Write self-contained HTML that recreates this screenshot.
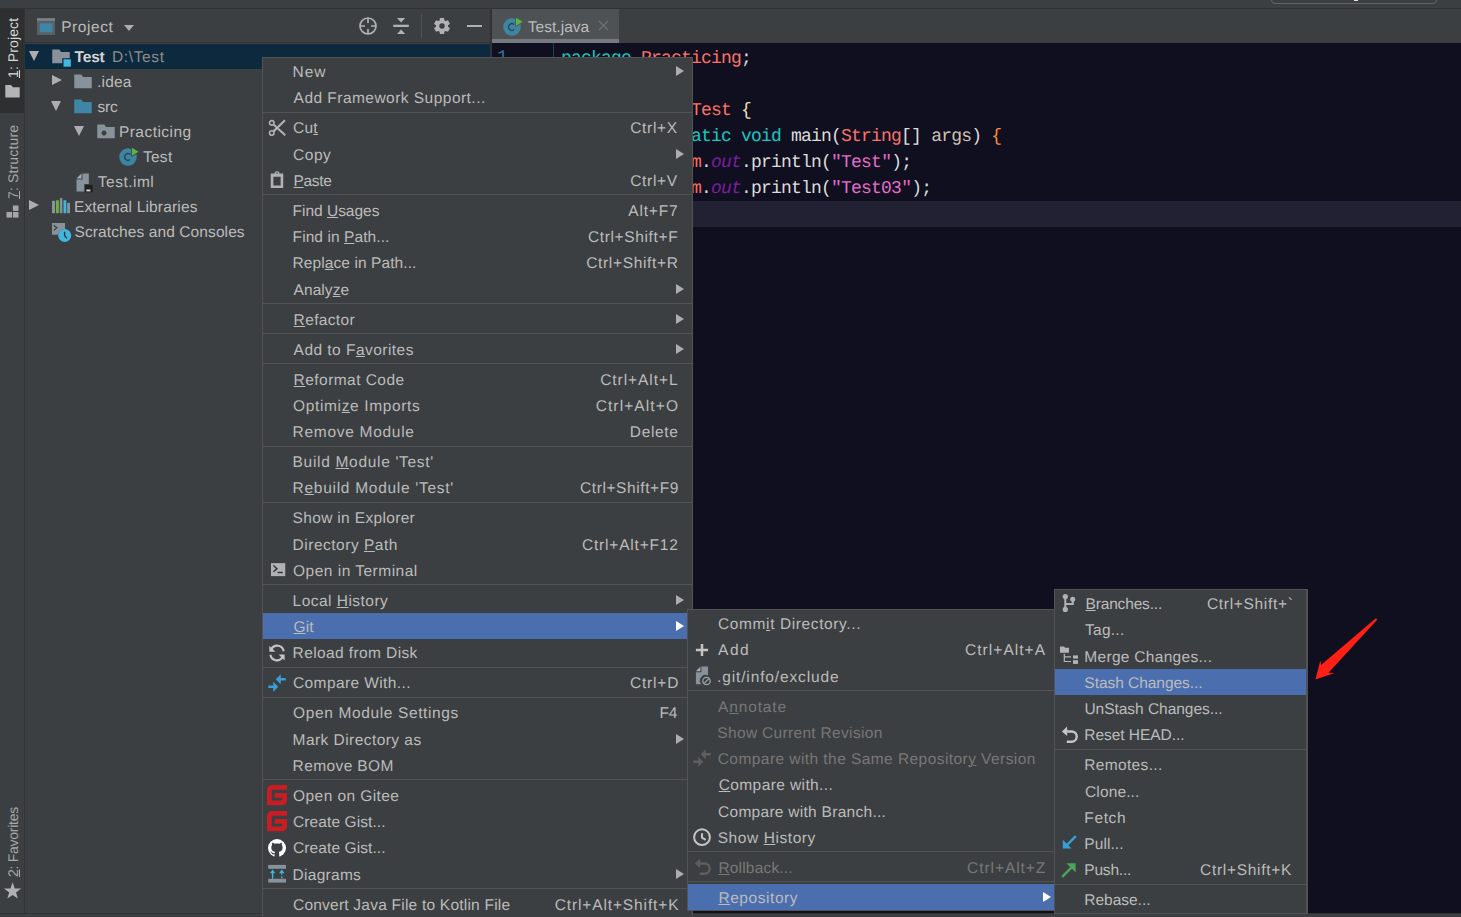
<!DOCTYPE html><html><head><meta charset="utf-8"><title>IDE</title><style>
*{box-sizing:border-box;margin:0;padding:0}
html,body{width:1461px;height:917px;overflow:hidden;background:#3c3f41}
body{font-family:"Liberation Sans",sans-serif;font-size:15px;color:#bbbbbb;position:relative;text-rendering:geometricPrecision}
u{text-decoration:underline;text-underline-offset:1.4px;text-decoration-thickness:1.3px}
svg{display:block}
.abs{position:absolute}
#top{left:0;top:0;width:1461px;height:9px;background:#3c3f41;border-bottom:1px solid #323232}
#lstrip{left:0;top:9px;width:25px;height:904px;background:#3c3f41;border-right:1px solid #323232}
#lsel{left:0;top:9px;width:24px;height:104px;background:#2d2f30}
.vt{position:absolute;white-space:nowrap;transform-origin:0 0;transform:rotate(-90deg);font-size:14px;line-height:16px;height:16px}
#proj{left:25px;top:9px;width:465px;height:904px;background:#3c3f41}
#phead{left:25px;top:9px;width:465px;height:34px;border-bottom:1px solid #323232}
.tr{position:absolute;left:25px;width:465px;height:25px;line-height:25px;white-space:nowrap}
.tr.sel{background:#0d293e;width:465px}
.tr .ic,.mi .ic{position:absolute;width:20px;height:20px}
.tx{position:absolute;top:0;font-size:15.5px;line-height:20px;height:20px;white-space:nowrap}
.tr .tx{top:3.63px}
.ta{position:absolute;top:7px;width:0;height:0}
.ta.down{border-left:5.8px solid transparent;border-right:5.8px solid transparent;border-top:10px solid #adadad;top:7px}
.ta.right{border-top:5.8px solid transparent;border-bottom:5.8px solid transparent;border-left:10px solid #adadad;top:6.2px}
#divider{left:490px;top:9px;width:2px;height:904px;background:#323232}
#tabs{left:492px;top:9px;width:969px;height:34px;background:#3c3f41}
#tab{left:492px;top:9px;width:127px;height:34px;background:#4e5254}
#tabul{left:492px;top:39px;width:127px;height:4px;background:#747a80}
#editor{left:492px;top:43px;width:969px;height:870px;background:#100f1f}
#gutline{left:553px;top:43px;width:1px;height:870px;background:#0e4a50}
#curline{left:554px;top:201px;width:907px;height:26px;background:#222133}
#bottom{left:0;top:913px;width:1461px;height:4px;background:#3c3f41;border-top:1px solid #323232}
.cln{position:absolute;left:561px;height:26px;line-height:26px;white-space:pre;font-family:"Liberation Mono",monospace;font-size:18px;letter-spacing:-0.8px;color:#d8d8d8}
.kw{color:#19c8c0}.cl{color:#fa7268}.pl{color:#dcdcdc}.b1{color:#f3dfae}.b2{color:#ff8c32}
.pa{color:#cfc0b4}.fi{color:#7a1fa0;font-style:italic}.st{color:#e16ec8}.q{color:#e16ec8}
.menu{position:absolute;background:#3c3f41;border:1px solid #535353;overflow:hidden}
.mi{position:absolute;left:0;right:0;white-space:nowrap}
.mi.hl{background:#4b6eaf}
.mi.dis{color:#777777}
.mi .ar{position:absolute;width:0;height:0;border-top:5px solid transparent;border-bottom:5px solid transparent;border-left:8px solid #adadad}
.mi.hl .ar{border-left-color:#fff}
.sep{position:absolute;left:0;right:0;height:1px;background:#535353}
</style></head><body>
<div id="top" class="abs"></div>
<div id="topbox" class="abs" style="left:1270.5px;top:-10px;width:166px;height:14.3px;border:1.5px solid #626567;border-radius:4px"></div><div class="abs" style="left:1354px;top:0;width:4px;height:1px;background:#e8e0d8"></div>
<div id="lstrip" class="abs"></div><div id="lsel" class="abs"></div>
<div class="vt" style="left:5px;top:78px;color:#d8d8d8;letter-spacing:0.1px"><u>1</u>: Project</div>
<div class="abs" style="left:4px;top:83px"><svg width="17" height="16" viewBox="0 0 17 16" style="overflow:visible"><path fill="#b4b4b4" d="M1.3,2 H7 L9,4.2 H15.7 V14.4 H1.3 Z"/></svg></div>
<div class="vt" style="left:5px;top:198.5px;color:#a8a8a8;letter-spacing:0.15px"><u>7</u>: Structure</div>
<div class="abs" style="left:4px;top:202px"><svg width="17" height="16" viewBox="0 0 17 16" style="overflow:visible"><rect x="2.5" y="10" width="5.5" height="5.6" fill="#a4a6a8"/><rect x="8.9" y="10" width="5.6" height="5.6" fill="#a4a6a8"/><rect x="8.9" y="3.5" width="5.6" height="5.4" fill="#a4a6a8"/></svg></div>
<div class="vt" style="left:5px;top:877px;color:#a8a8a8;letter-spacing:-0.27px"><u>2</u>: Favorites</div>
<div class="abs" style="left:4px;top:882px"><svg width="18" height="18" viewBox="0 0 18 18" style="overflow:visible"><polygon fill="#afb1b3" points="8.60,0.30 10.72,6.39 17.16,6.52 12.02,10.41 13.89,16.58 8.60,12.90 3.31,16.58 5.18,10.41 0.04,6.52 6.48,6.39"/></svg></div>
<div id="proj" class="abs"></div><div id="phead" class="abs"></div>
<div class="abs" style="left:37px;top:18px"><svg width="18" height="17" viewBox="0 0 18 17" style="overflow:visible"><rect x="0" y="0.3" width="18" height="16.7" fill="#596066"/><rect x="0" y="0.3" width="18" height="2.4" fill="#7d868c"/><rect x="2.8" y="5.3" width="12.6" height="9" fill="#3d86a5"/></svg></div>
<div class="abs" style="left:0;top:18px;height:20px;line-height:20px"><span id="ptitle" class="tx " style="left:61.20px;letter-spacing:0.552px;">Project</span></div>
<div class="abs" style="left:124px;top:24.5px;width:0;height:0;border-left:5.5px solid transparent;border-right:5.5px solid transparent;border-top:6px solid #adadad"></div>
<div class="abs" style="left:359px;top:17px"><svg width="18" height="18" viewBox="0 0 18 18" style="overflow:visible"><circle cx="9" cy="9" r="8" fill="none" stroke="#afb1b3" stroke-width="1.7"/><path d="M9,1 V6 M9,12 V17 M1,9 H6 M12,9 H17" stroke="#afb1b3" stroke-width="1.7"/></svg></div>
<div class="abs" style="left:392px;top:17px"><svg width="18" height="18" viewBox="0 0 18 18" style="overflow:visible"><rect x="1.3" y="7.7" width="15.5" height="2.3" fill="#afb1b3"/><path d="M5,1 H13.2 L9.1,5.6 Z M5,17 H13.2 L9.1,12.4 Z" fill="#afb1b3"/></svg></div>
<div class="abs" style="left:421px;top:14px;width:1px;height:24px;background:#55534f"></div>
<div class="abs" style="left:433px;top:17px"><svg width="18" height="18" viewBox="0 0 18 18" style="overflow:visible"><path fill-rule="evenodd" fill="#afb1b3" d="M6.95,0.96 L11.05,0.96 L11.49,3.43 L12.58,4.06 L14.94,3.20 L16.99,6.76 L15.07,8.37 L15.07,9.63 L16.99,11.24 L14.94,14.80 L12.58,13.94 L11.49,14.57 L11.05,17.04 L6.95,17.04 L6.51,14.57 L5.42,13.94 L3.06,14.80 L1.01,11.24 L2.93,9.63 L2.93,8.37 L1.01,6.76 L3.06,3.20 L5.42,4.06 L6.51,3.43 Z M9,6.2 a2.8,2.8 0 1 0 0.001,0 Z"/></svg></div>
<div class="abs" style="left:466.5px;top:25px;width:15px;height:2px;background:#afb1b3"></div>
<div class="tr sel" style="top:44px"><span class="ta down" style="left:3.6999999999999993px"></span><span class="ic" style="left:25.75px;top:2.5px"><svg width="20" height="20" viewBox="0 0 16 16" style="overflow:visible" ><path fill="#87929a" d="M9,13 L1,13 L1,2 L6.697,2 L7.985,4 L15,4 L15,9 L9,9 Z"/><rect x="10" y="9.85" width="5.9" height="5.9" fill="#40b6e0"/></svg></span><span id="t0a" class="tx " style="left:74.61px;letter-spacing:-0.190px;margin-left:-25px;font-weight:bold;color:#d5d5d5">Test</span><span id="t0b" class="tx " style="left:111.92px;letter-spacing:0.645px;margin-left:-25px;color:#8c8c8c">D:\Test</span></div><div class="tr" style="top:69px"><span class="ta right" style="left:27px"></span><span class="ic" style="left:47.650000000000006px;top:2.5px"><svg width="20" height="20" viewBox="0 0 16 16" style="overflow:visible" ><polygon fill="#87929a" points="1 13 15 13 15 4 7.985 4 6.697 2 1 2"/></svg></span><span id="t1" class="tx " style="left:96.96px;letter-spacing:0.225px;margin-left:-25px">.idea</span></div><div class="tr" style="top:94px"><span class="ta down" style="left:25.700000000000003px"></span><span class="ic" style="left:47.650000000000006px;top:2.5px"><svg width="20" height="20" viewBox="0 0 16 16" style="overflow:visible" ><polygon fill="#3d86a5" points="1 13 15 13 15 4 7.985 4 6.697 2 1 2"/></svg></span><span id="t2" class="tx " style="left:97.60px;letter-spacing:-0.300px;margin-left:-25px">src</span></div><div class="tr" style="top:119px"><span class="ta down" style="left:49.2px"></span><span class="ic" style="left:70.65px;top:2.5px"><svg width="20" height="20" viewBox="0 0 16 16" style="overflow:visible" ><path fill="#87929a" fill-rule="evenodd" d="M1,13 L15,13 L15,4 L7.985,4 L6.697,2 L1,2 Z M6.4,6.8 a2,2 0 1 0 0.001,0 Z"/></svg></span><span id="t3" class="tx " style="left:118.88px;letter-spacing:0.478px;margin-left:-25px">Practicing</span></div><div class="tr" style="top:144px"><span class="ic" style="left:93px;top:2.5px"><svg width="20" height="20" viewBox="0 0 16 16" style="overflow:visible" ><defs><mask id="mk1"><rect x="-2" y="-2" width="22" height="22" fill="#fff"/><path d="M11.2,0.5 L16.5,3.8 L11.2,7.0 Z" fill="#000" stroke="#000" stroke-width="1.3" stroke-linejoin="round"/></mask></defs><g mask="url(#mk1)"><circle cx="8" cy="8" r="7" fill="#3e86a0"/><path d="M9.74,10.07 A2.7,2.7 0 1 1 9.74,5.93" fill="none" stroke="#27485a" stroke-width="1.1"/></g><path d="M11.2,0.5 L16.5,3.8 L11.2,7.0 Z" fill="#5ab644"/></svg></span><span id="t4" class="tx " style="left:142.90px;letter-spacing:0.299px;margin-left:-25px">Test</span></div><div class="tr" style="top:169px"><span class="ic" style="left:50.400000000000006px;top:2.5px"><svg width="20" height="20" viewBox="0 0 20 20" style="overflow:visible"><path fill="#a3adb4" d="M1.5,6.5 L6.5,1.5 L6.5,6.5 Z"/><path fill="#87929a" d="M7.5,1.5 L13.8,1.5 L13.8,12 L9.2,12 L9.2,19.5 L1.5,19.5 L1.5,7.5 L7.5,7.5 Z"/><rect x="10.1" y="12.9" width="7.6" height="7.4" fill="#231f20"/><rect x="11.4" y="17.5" width="4" height="1.9" fill="#d6d6d6"/></svg></span><span id="t5" class="tx " style="left:97.82px;letter-spacing:0.487px;margin-left:-25px">Test.iml</span></div><div class="tr" style="top:194px"><span class="ta right" style="left:4px"></span><span class="ic" style="left:26px;top:0px"><svg width="20" height="20" viewBox="0 0 20 20" style="overflow:visible"><rect x="1" y="6.8" width="3" height="12.4" fill="#87929a"/><rect x="4.9" y="6.3" width="3" height="12.9" fill="#62b543"/><rect x="8.8" y="4.1" width="2.6" height="15.1" fill="#87929a"/><rect x="12.5" y="6.3" width="2.8" height="12.9" fill="#40b6e0"/><rect x="16.1" y="8.9" width="2.9" height="10.3" fill="#87929a"/></svg></span><span id="t6" class="tx " style="left:73.90px;letter-spacing:0.176px;margin-left:-25px">External Libraries</span></div><div class="tr" style="top:219px"><span class="ic" style="left:26px;top:0px"><svg width="20" height="20" viewBox="0 0 20 20" style="overflow:visible"><path fill="#87929a" d="M1,4.1 H14 V10.3 A7.8,7.8 0 0 0 7,15.7 H1 Z"/><path d="M2.8,6.2 L5.8,8.8 L2.8,11.4" fill="none" stroke="#3c3f41" stroke-width="1.2"/><circle cx="13.7" cy="16.5" r="6.5" fill="#40b6e0"/><path d="M13.6,12.8 V16.6 L16,19.4" fill="none" stroke="#27343c" stroke-width="1.4"/></svg></span><span id="t7" class="tx " style="left:74.50px;letter-spacing:0.100px;margin-left:-25px">Scratches and Consoles</span></div>
<div id="divider" class="abs"></div>
<div id="tabs" class="abs"></div><div id="tab" class="abs"></div><div id="tabul" class="abs"></div>
<div class="abs" style="left:502px;top:16.5px"><svg width="20" height="20" viewBox="0 0 16 16" style="overflow:visible" ><defs><mask id="mk2"><rect x="-2" y="-2" width="22" height="22" fill="#fff"/><path d="M11.2,0.5 L16.5,3.8 L11.2,7.0 Z" fill="#000" stroke="#000" stroke-width="1.3" stroke-linejoin="round"/></mask></defs><g mask="url(#mk2)"><circle cx="8" cy="8" r="7" fill="#3e86a0"/><path d="M9.74,10.07 A2.7,2.7 0 1 1 9.74,5.93" fill="none" stroke="#27485a" stroke-width="1.1"/></g><path d="M11.2,0.5 L16.5,3.8 L11.2,7.0 Z" fill="#5ab644"/></svg></div>
<div class="abs" style="left:0;top:18px;height:20px;line-height:20px"><span id="tabname" class="tx " style="left:527.82px;letter-spacing:0.026px;">Test.java</span></div>
<div class="abs" style="left:598px;top:20px"><svg width="11" height="11" viewBox="0 0 11 11"><path d="M1 1L10 10M10 1L1 10" stroke="#6e7275" stroke-width="1.2" fill="none"/></svg></div>
<div id="editor" class="abs"></div>
<div id="gutline" class="abs"></div><div id="curline" class="abs"></div>
<div class="abs" style="left:497px;top:45px;height:26px;line-height:26px;font-family:'Liberation Mono',monospace;font-size:18px;color:#3a6f9f">1</div>
<div class="cln" style="top:46px"><span class="kw">package</span> <span class="cl">Practicing</span><span class="pl">;</span></div><div class="cln" style="top:98px"><span class="kw">public class</span> <span class="cl">Test</span> <span class="b1">{</span></div><div class="cln" style="top:124px">    <span class="kw">public static void</span> <span class="pl">main(</span><span class="cl">String</span><span class="pl">[]</span> <span class="pa">args</span><span class="pl">)</span> <span class="b2">{</span></div><div class="cln" style="top:150px">        <span class="cl">System</span><span class="pl">.</span><span class="fi">out</span><span class="pl">.println(</span><span class="q">"</span><span class="st">Test</span><span class="q">"</span><span class="pl">);</span></div><div class="cln" style="top:176px">        <span class="cl">System</span><span class="pl">.</span><span class="fi">out</span><span class="pl">.println(</span><span class="q">"</span><span class="st">Test03</span><span class="q">"</span><span class="pl">);</span></div>
<div id="bottom" class="abs"></div>
<div class="menu" style="left:262px;top:57px;width:431px;height:873px;border-right-width:1px"><div class="mi" style="top:0px;height:26px;line-height:26px"><span id="m0_0_lb" class="tx " style="left:292.60px;letter-spacing:0.980px;margin-left:-263px;top:4.63px">New</span><span class="ar" style="left:413px;top:8px"></span></div><div class="mi" style="top:26px;height:27px;line-height:27px"><span id="m0_1_lb" class="tx " style="left:293.60px;letter-spacing:0.466px;margin-left:-263px;top:4.63px">Add Framework Support...</span></div><div class="sep" style="top:54px"></div><div class="mi" style="top:56px;height:27px;line-height:27px"><span class="ic" style="left:4px;top:3.75px"><svg width="20" height="20" viewBox="0 0 16 16" style="overflow:visible" ><circle cx="3.8" cy="3.9" r="1.8" fill="none" stroke="#afb1b3" stroke-width="1.3"/><circle cx="3.8" cy="12.0" r="1.8" fill="none" stroke="#afb1b3" stroke-width="1.3"/><path d="M5.2,5.2 L14.6,13.8 M5.2,10.7 L14.4,1.8" stroke="#afb1b3" stroke-width="1.7" fill="none"/></svg></span><span id="m0_2_lb" class="tx " style="left:293.03px;letter-spacing:0.245px;margin-left:-263px;top:4.63px">Cu<u>t</u></span><span id="m0_2_sc" class="tx " style="left:630.20px;letter-spacing:0.700px;margin-left:-263px;top:4.63px">Ctrl+X</span></div><div class="mi" style="top:83px;height:26px;line-height:26px"><span id="m0_3_lb" class="tx " style="left:293.03px;letter-spacing:0.536px;margin-left:-263px;top:4.63px">Copy</span><span class="ar" style="left:413px;top:8px"></span></div><div class="mi" style="top:109px;height:26px;line-height:26px"><span class="ic" style="left:4px;top:2.75px"><svg width="20" height="20" viewBox="0 0 16 16" style="overflow:visible" ><path fill="#afb1b3" fill-rule="evenodd" d="M3,2.8 H6.2 V2 A1.8,1 0 0 1 9.8,2 V2.8 H13 V14.4 H3 Z M5.1,5.4 V12.3 H10.9 V5.4 Z M7.4,2 h1.2 v0.9 h-1.2 Z"/></svg></span><span id="m0_4_lb" class="tx " style="left:293.60px;letter-spacing:-0.355px;margin-left:-263px;top:4.63px"><u>P</u>aste</span><span id="m0_4_sc" class="tx " style="left:630.20px;letter-spacing:0.680px;margin-left:-263px;top:4.63px">Ctrl+V</span></div><div class="sep" style="top:136px"></div><div class="mi" style="top:139px;height:26px;line-height:26px"><span id="m0_5_lb" class="tx " style="left:292.60px;letter-spacing:-0.020px;margin-left:-263px;top:4.63px">Find <u>U</u>sages</span><span id="m0_5_sc" class="tx " style="left:628.37px;letter-spacing:0.784px;margin-left:-263px;top:4.63px">Alt+F7</span></div><div class="mi" style="top:165px;height:26px;line-height:26px"><span id="m0_6_lb" class="tx " style="left:292.60px;letter-spacing:0.079px;margin-left:-263px;top:4.63px">Find in <u>P</u>ath...</span><span id="m0_6_sc" class="tx " style="left:588.00px;letter-spacing:0.628px;margin-left:-263px;top:4.63px">Ctrl+Shift+F</span></div><div class="mi" style="top:191px;height:27px;line-height:27px"><span id="m0_7_lb" class="tx " style="left:292.60px;letter-spacing:0.082px;margin-left:-263px;top:4.63px">Repl<u>a</u>ce in Path...</span><span id="m0_7_sc" class="tx " style="left:586.20px;letter-spacing:0.672px;margin-left:-263px;top:4.63px">Ctrl+Shift+R</span></div><div class="mi" style="top:218px;height:26px;line-height:26px"><span id="m0_8_lb" class="tx " style="left:293.60px;letter-spacing:0.053px;margin-left:-263px;top:4.63px">Analy<u>z</u>e</span><span class="ar" style="left:413px;top:8px"></span></div><div class="sep" style="top:245px"></div><div class="mi" style="top:248px;height:26px;line-height:26px"><span id="m0_9_lb" class="tx " style="left:293.60px;letter-spacing:0.354px;margin-left:-263px;top:4.63px"><u>R</u>efactor</span><span class="ar" style="left:413px;top:8px"></span></div><div class="sep" style="top:275px"></div><div class="mi" style="top:278px;height:26px;line-height:26px"><span id="m0_10_lb" class="tx " style="left:293.60px;letter-spacing:0.460px;margin-left:-263px;top:4.63px">Add to F<u>a</u>vorites</span><span class="ar" style="left:413px;top:8px"></span></div><div class="sep" style="top:305px"></div><div class="mi" style="top:308px;height:26px;line-height:26px"><span id="m0_11_lb" class="tx " style="left:293.60px;letter-spacing:0.450px;margin-left:-263px;top:4.63px"><u>R</u>eformat Code</span><span id="m0_11_sc" class="tx " style="left:600.20px;letter-spacing:0.934px;margin-left:-263px;top:4.63px">Ctrl+Alt+L</span></div><div class="mi" style="top:334px;height:26px;line-height:26px"><span id="m0_12_lb" class="tx " style="left:293.07px;letter-spacing:0.635px;margin-left:-263px;top:4.63px">Optimi<u>z</u>e Imports</span><span id="m0_12_sc" class="tx " style="left:595.66px;letter-spacing:1.105px;margin-left:-263px;top:4.63px">Ctrl+Alt+O</span></div><div class="mi" style="top:360px;height:26px;line-height:26px"><span id="m0_13_lb" class="tx " style="left:292.60px;letter-spacing:0.710px;margin-left:-263px;top:4.63px">Remove Module</span><span id="m0_13_sc" class="tx " style="left:629.80px;letter-spacing:0.662px;margin-left:-263px;top:4.63px">Delete</span></div><div class="sep" style="top:388px"></div><div class="mi" style="top:390px;height:26px;line-height:26px"><span id="m0_14_lb" class="tx " style="left:292.60px;letter-spacing:0.684px;margin-left:-263px;top:4.63px">Build <u>M</u>odule &#x27;Test&#x27;</span></div><div class="mi" style="top:416px;height:27px;line-height:27px"><span id="m0_15_lb" class="tx " style="left:292.60px;letter-spacing:0.715px;margin-left:-263px;top:4.63px">R<u>e</u>build Module &#x27;Test&#x27;</span><span id="m0_15_sc" class="tx " style="left:580.00px;letter-spacing:0.593px;margin-left:-263px;top:4.63px">Ctrl+Shift+F9</span></div><div class="sep" style="top:444px"></div><div class="mi" style="top:446px;height:27px;line-height:27px"><span id="m0_16_lb" class="tx " style="left:292.60px;letter-spacing:0.333px;margin-left:-263px;top:4.63px">Show in Explorer</span></div><div class="mi" style="top:473px;height:26px;line-height:26px"><span id="m0_17_lb" class="tx " style="left:292.60px;letter-spacing:0.509px;margin-left:-263px;top:4.63px">Directory <u>P</u>ath</span><span id="m0_17_sc" class="tx " style="left:582.00px;letter-spacing:0.809px;margin-left:-263px;top:4.63px">Ctrl+Alt+F12</span></div><div class="mi" style="top:499px;height:26px;line-height:26px"><span class="ic" style="left:4px;top:2.75px"><svg width="20" height="20" viewBox="0 0 16 16" style="overflow:visible" ><rect x="3.2" y="2.5" width="11.4" height="10.4" fill="#afb1b3"/><path d="M5.1,4.4 L8,6.9 L5.1,9.4 M8.5,10 H12.6" fill="none" stroke="#313335" stroke-width="1.1"/></svg></span><span id="m0_18_lb" class="tx " style="left:293.07px;letter-spacing:0.485px;margin-left:-263px;top:4.63px">Open in Terminal</span></div><div class="sep" style="top:526px"></div><div class="mi" style="top:529px;height:26px;line-height:26px"><span id="m0_19_lb" class="tx " style="left:292.60px;letter-spacing:0.464px;margin-left:-263px;top:4.63px">Local <u>H</u>istory</span><span class="ar" style="left:413px;top:8px"></span></div><div class="mi hl" style="top:555px;height:26px;line-height:26px"><span id="m0_20_lb" class="tx " style="left:293.60px;letter-spacing:0.025px;margin-left:-263px;top:4.63px"><u>G</u>it</span><span class="ar" style="left:413px;top:8px"></span></div><div class="mi" style="top:581px;height:27px;line-height:27px"><span class="ic" style="left:4px;top:3.75px"><svg width="20" height="20" viewBox="0 0 16 16" style="overflow:visible" ><path d="M13.3,6.6 A5.3,5.3 0 0 0 3.6,4.6" fill="none" stroke="#c4c4c4" stroke-width="1.7"/><path d="M1.9,2.1 V6.9 H6.7 Z" fill="#c4c4c4"/><path d="M2.7,9.4 A5.3,5.3 0 0 0 12.4,11.4" fill="none" stroke="#c4c4c4" stroke-width="1.7"/><path d="M14.1,13.9 V9.1 H9.3 Z" fill="#c4c4c4"/></svg></span><span id="m0_21_lb" class="tx " style="left:292.60px;letter-spacing:0.393px;margin-left:-263px;top:4.63px">Reload from Disk</span></div><div class="sep" style="top:609px"></div><div class="mi" style="top:611px;height:27px;line-height:27px"><span class="ic" style="left:4px;top:3.75px"><svg width="20" height="20" viewBox="0 0 16 16" style="overflow:visible" ><path fill="#389fd6" d="M7,5 L11,1 L11,4 L15,4 L15,6 L11,6 L11,9 Z M9,11 L5,15 L5,12 L1,12 L1,10 L5,10 L5,7 Z"/></svg></span><span id="m0_22_lb" class="tx " style="left:293.03px;letter-spacing:0.389px;margin-left:-263px;top:4.63px">Compare With...</span><span id="m0_22_sc" class="tx " style="left:630.00px;letter-spacing:0.812px;margin-left:-263px;top:4.63px">Ctrl+D</span></div><div class="sep" style="top:639px"></div><div class="mi" style="top:641px;height:27px;line-height:27px"><span id="m0_23_lb" class="tx " style="left:293.07px;letter-spacing:0.625px;margin-left:-263px;top:4.63px">Open Module Settings</span><span id="m0_23_sc" class="tx " style="left:659.53px;letter-spacing:-0.230px;margin-left:-263px;top:4.63px">F4</span></div><div class="mi" style="top:668px;height:26px;line-height:26px"><span id="m0_24_lb" class="tx " style="left:292.60px;letter-spacing:0.444px;margin-left:-263px;top:4.63px">Mark Directory as</span><span class="ar" style="left:413px;top:8px"></span></div><div class="mi" style="top:694px;height:26px;line-height:26px"><span id="m0_25_lb" class="tx " style="left:292.60px;letter-spacing:0.392px;margin-left:-263px;top:4.63px">Remove BOM</span></div><div class="sep" style="top:721px"></div><div class="mi" style="top:724px;height:26px;line-height:26px"><span class="ic" style="left:4px;top:2.75px"><svg width="20" height="20" viewBox="0 0 20 20" style="overflow:visible"><path fill="#c71d23" d="M5,0 H20 V4.8 H6.4 A1.6,1.6 0 0 0 4.8,6.4 V15.4 H14 A1.3,1.3 0 0 0 15.3,14.1 V12.8 H7.6 V8 H20 V15.5 A4.7,4.7 0 0 1 15.3,20.2 H0 V5 A5,5 0 0 1 5,0 Z"/></svg></span><span id="m0_26_lb" class="tx " style="left:293.07px;letter-spacing:0.426px;margin-left:-263px;top:4.63px">Open on Gitee</span></div><div class="mi" style="top:750px;height:26px;line-height:26px"><span class="ic" style="left:4px;top:3.00px"><svg width="20" height="20" viewBox="0 0 20 20" style="overflow:visible"><path fill="#c71d23" d="M5,0 H20 V4.8 H6.4 A1.6,1.6 0 0 0 4.8,6.4 V15.4 H14 A1.3,1.3 0 0 0 15.3,14.1 V12.8 H7.6 V8 H20 V15.5 A4.7,4.7 0 0 1 15.3,20.2 H0 V5 A5,5 0 0 1 5,0 Z"/></svg></span><span id="m0_27_lb" class="tx " style="left:293.03px;letter-spacing:0.092px;margin-left:-263px;top:4.63px">Create Gist...</span></div><div class="mi" style="top:776px;height:27px;line-height:27px"><span class="ic" style="left:4px;top:3.75px"><svg width="20" height="20" viewBox="0 0 20 20" style="overflow:visible"><circle cx="10" cy="10" r="9" fill="#ffffff"/><path fill="#3c3f41" d="M7.6,19 C7.6,17.6 7.6,16.9 7.6,16.3 C5.2,16.8 4.7,15.2 4.7,15.2 C4.3,14.2 3.7,13.9 3.7,13.9 C2.9,13.4 3.8,13.4 3.8,13.4 C4.7,13.5 5.1,14.3 5.1,14.3 C5.9,15.6 7.2,15.2 7.7,15 C7.8,14.4 8,14 8.3,13.8 C6.3,13.6 4.3,12.8 4.3,9.5 C4.3,8.5 4.6,7.7 5.2,7.1 C5.1,6.9 4.8,6 5.3,4.8 C5.3,4.8 6,4.6 7.6,5.7 C8.3,5.5 9.1,5.4 10,5.4 C10.8,5.4 11.6,5.5 12.3,5.7 C13.9,4.6 14.6,4.8 14.6,4.8 C15.1,6 14.8,6.9 14.7,7.1 C15.3,7.7 15.6,8.5 15.6,9.5 C15.6,12.8 13.6,13.6 11.6,13.8 C11.9,14.1 12.2,14.7 12.2,15.5 C12.2,16.8 12.2,17.9 12.2,19 Z"/></svg></span><span id="m0_28_lb" class="tx " style="left:293.03px;letter-spacing:0.092px;margin-left:-263px;top:4.63px">Create Gist...</span></div><div class="mi" style="top:803px;height:26px;line-height:26px"><span class="ic" style="left:4px;top:2.50px"><svg width="20" height="20" viewBox="0 0 20 20" style="overflow:visible"><rect x="1.2" y="0.9" width="17.8" height="3.9" fill="#87929a"/><rect x="1.2" y="14.8" width="17.8" height="3.8" fill="#87929a"/><path d="M5.6,7 V14.8 M14.8,9.5 V11 M14.8,12.3 V14.3" stroke="#40b6e0" stroke-width="1.3" fill="none"/><path d="M5.6,5.5 L8.3,9.3 H2.9 Z M14.8,5.5 L17.5,9.3 H12.1 Z" fill="#40b6e0"/></svg></span><span id="m0_29_lb" class="tx " style="left:292.60px;letter-spacing:0.272px;margin-left:-263px;top:4.63px">Diagrams</span><span class="ar" style="left:413px;top:8px"></span></div><div class="sep" style="top:830px"></div><div class="mi" style="top:833px;height:26px;line-height:26px"><span id="m0_30_lb" class="tx " style="left:293.03px;letter-spacing:0.222px;margin-left:-263px;top:4.63px">Convert Java File to Kotlin File</span><span id="m0_30_sc" class="tx " style="left:554.66px;letter-spacing:0.877px;margin-left:-263px;top:4.63px">Ctrl+Alt+Shift+K</span></div></div>
<div class="menu" style="left:687px;top:609px;width:368px;height:302px;border-right-width:1px"><div class="mi" style="top:0px;height:26px;line-height:26px"><span id="m1_0_lb" class="tx " style="left:718.00px;letter-spacing:0.609px;margin-left:-688px;top:4.63px">Comm<u>i</u>t Directory...</span></div><div class="mi" style="top:26px;height:27px;line-height:27px"><span class="ic" style="left:4px;top:3.75px"><svg width="20" height="20" viewBox="0 0 20 20" style="overflow:visible"><path d="M10,3.9 V16.1 M3.9,10 H16.1" stroke="#c4c4c4" stroke-width="2.5" fill="none"/></svg></span><span id="m1_1_lb" class="tx " style="left:718.00px;letter-spacing:1.555px;margin-left:-688px;top:4.63px">Add</span><span id="m1_1_sc" class="tx " style="left:965.00px;letter-spacing:1.044px;margin-left:-688px;top:4.63px">Ctrl+Alt+A</span></div><div class="mi" style="top:53px;height:26px;line-height:26px"><span class="ic" style="left:4px;top:2.50px"><svg width="20" height="20" viewBox="0 0 20 20" style="overflow:visible"><path fill="#a3adb4" d="M3.9,5.3 L8.4,0.6 L8.4,5.3 Z"/><path fill="#87929a" d="M9.4,0.6 H16 V9.4 A5.6,5.6 0 0 0 9.5,18.3 H3.9 V6.3 H9.4 Z"/><circle cx="14.5" cy="15" r="3.7" fill="none" stroke="#9aa3a9" stroke-width="1.3"/><path d="M11.9,17.6 L17.1,12.4" stroke="#9aa3a9" stroke-width="1.3"/></svg></span><span id="m1_2_lb" class="tx " style="left:717.00px;letter-spacing:0.871px;margin-left:-688px;top:4.63px">.git/info/exclude</span></div><div class="sep" style="top:80px"></div><div class="mi dis" style="top:83px;height:26px;line-height:26px"><span id="m1_3_lb" class="tx " style="left:718.00px;letter-spacing:0.865px;margin-left:-688px;top:4.63px">A<u>n</u>notate</span></div><div class="mi dis" style="top:109px;height:26px;line-height:26px"><span id="m1_4_lb" class="tx " style="left:717.35px;letter-spacing:0.321px;margin-left:-688px;top:4.63px">Show Current Revision</span></div><div class="mi dis" style="top:135px;height:26px;line-height:26px"><span class="ic" style="left:4px;top:3.00px"><svg width="20" height="20" viewBox="0 0 16 16" style="overflow:visible" ><path fill="#5e5e5e" d="M7,5 L11,1 L11,4 L15,4 L15,6 L11,6 L11,9 Z M9,11 L5,15 L5,12 L1,12 L1,10 L5,10 L5,7 Z"/></svg></span><span id="m1_5_lb" class="tx " style="left:717.74px;letter-spacing:0.436px;margin-left:-688px;top:4.63px">Compare with the Same Repositor<u>y</u> Version</span></div><div class="mi" style="top:161px;height:27px;line-height:27px"><span id="m1_6_lb" class="tx " style="left:718.70px;letter-spacing:0.400px;margin-left:-688px;top:4.63px"><u>C</u>ompare with...</span></div><div class="mi" style="top:188px;height:26px;line-height:26px"><span id="m1_7_lb" class="tx " style="left:718.00px;letter-spacing:0.283px;margin-left:-688px;top:4.63px">Compare with Branch...</span></div><div class="mi" style="top:214px;height:26px;line-height:26px"><span class="ic" style="left:4px;top:2.75px"><svg width="20" height="20" viewBox="0 0 20 20" style="overflow:visible"><circle cx="10" cy="10.2" r="7.9" fill="none" stroke="#c4c4c4" stroke-width="2"/><path d="M10,6.2 V10.7 L13.7,12.9" fill="none" stroke="#c4c4c4" stroke-width="2"/></svg></span><span id="m1_8_lb" class="tx " style="left:717.70px;letter-spacing:0.574px;margin-left:-688px;top:4.63px">Show <u>H</u>istory</span></div><div class="sep" style="top:241px"></div><div class="mi dis" style="top:244px;height:26px;line-height:26px"><span class="ic" style="left:4px;top:2.75px"><svg width="20" height="20" viewBox="0 0 20 20" style="overflow:visible"><path d="M2.9,6.5 L8.1,1.5 V11.1 Z" fill="#5e5e5e"/><path d="M8,6.45 H12.6 A5.15,5.15 0 0 1 12.6,16.75 H7.8" fill="none" stroke="#5e5e5e" stroke-width="2.4"/></svg></span><span id="m1_9_lb" class="tx " style="left:718.40px;letter-spacing:0.190px;margin-left:-688px;top:4.63px"><u>R</u>ollback...</span><span id="m1_9_sc" class="tx " style="left:967.00px;letter-spacing:0.953px;margin-left:-688px;top:4.63px">Ctrl+Alt+Z</span></div><div class="sep" style="top:271px"></div><div class="mi hl" style="top:274px;height:26px;line-height:26px"><span id="m1_10_lb" class="tx " style="left:718.40px;letter-spacing:0.566px;margin-left:-688px;top:4.63px"><u>R</u>epository</span><span class="ar" style="left:355px;top:8px"></span></div></div>
<div class="menu" style="left:1054px;top:589px;width:254px;height:325px;border-right-width:2px"><div class="mi" style="top:0px;height:26px;line-height:26px"><span class="ic" style="left:4px;top:3.00px"><svg width="20" height="20" viewBox="0 0 20 20" style="overflow:visible"><circle cx="6.3" cy="3.5" r="2.6" fill="#afb1b3"/><circle cx="6.3" cy="16.4" r="2.6" fill="#afb1b3"/><circle cx="13.7" cy="6.3" r="2.5" fill="#afb1b3"/><path d="M6.3,3.5 V16.4 M13.8,6.3 V10.9 H6.3" fill="none" stroke="#afb1b3" stroke-width="2"/></svg></span><span id="m2_0_lb" class="tx " style="left:1085.50px;letter-spacing:-0.160px;margin-left:-1055px;top:4.63px"><u>B</u>ranches...</span><span id="m2_0_sc" class="tx " style="left:1207.00px;letter-spacing:0.673px;margin-left:-1055px;top:4.63px">Ctrl+Shift+`</span></div><div class="mi" style="top:26px;height:27px;line-height:27px"><span id="m2_1_lb" class="tx " style="left:1085.10px;letter-spacing:0.240px;margin-left:-1055px;top:4.63px">Tag...</span></div><div class="mi" style="top:53px;height:26px;line-height:26px"><span class="ic" style="left:4px;top:2.50px"><svg width="20" height="20" viewBox="0 0 20 20" style="overflow:visible"><g transform="translate(1,-0.8)"><path fill="#b4b4b4" d="M0,1.3 H4 L5.2,2.6 H9 V7.5 H0 Z"/><path d="M4.3,8.5 V16.3 H11 M4.3,11.6 H11" fill="none" stroke="#b4b4b4" stroke-width="1.2"/><rect x="13" y="10.2" width="5" height="3.2" fill="#b4b4b4"/><rect x="13" y="15" width="5" height="3.7" fill="#b4b4b4"/></g></svg></span><span id="m2_2_lb" class="tx " style="left:1084.35px;letter-spacing:0.294px;margin-left:-1055px;top:4.63px">Merge Changes...</span></div><div class="mi hl" style="top:79px;height:26px;line-height:26px"><span id="m2_3_lb" class="tx " style="left:1084.33px;letter-spacing:-0.040px;margin-left:-1055px;top:4.63px">Stash Changes...</span></div><div class="mi" style="top:105px;height:26px;line-height:26px"><span id="m2_4_lb" class="tx " style="left:1084.41px;letter-spacing:-0.032px;margin-left:-1055px;top:4.63px">UnStash Changes...</span></div><div class="mi" style="top:131px;height:27px;line-height:27px"><span class="ic" style="left:4px;top:3.75px"><svg width="20" height="20" viewBox="0 0 20 20" style="overflow:visible"><path d="M2.9,6.5 L8.1,1.5 V11.1 Z" fill="#c4c4c4"/><path d="M8,6.45 H12.6 A5.15,5.15 0 0 1 12.6,16.75 H7.8" fill="none" stroke="#c4c4c4" stroke-width="2.4"/></svg></span><span id="m2_5_lb" class="tx " style="left:1084.35px;letter-spacing:-0.057px;margin-left:-1055px;top:4.63px">Reset HEAD...</span></div><div class="sep" style="top:159px"></div><div class="mi" style="top:161px;height:27px;line-height:27px"><span id="m2_6_lb" class="tx " style="left:1084.35px;letter-spacing:0.324px;margin-left:-1055px;top:4.63px">Remotes...</span></div><div class="mi" style="top:188px;height:26px;line-height:26px"><span id="m2_7_lb" class="tx " style="left:1085.00px;letter-spacing:0.129px;margin-left:-1055px;top:4.63px">Clone...</span></div><div class="mi" style="top:214px;height:26px;line-height:26px"><span id="m2_8_lb" class="tx " style="left:1084.35px;letter-spacing:0.598px;margin-left:-1055px;top:4.63px">Fetch</span></div><div class="mi" style="top:240px;height:26px;line-height:26px"><span class="ic" style="left:4px;top:3.00px"><svg width="20" height="20" viewBox="0 0 20 20" style="overflow:visible"><path d="M16.8,3.1 L6.6,13.3" stroke="#389fd6" stroke-width="2.4" fill="none"/><path d="M3.8,6.8 V15.6 H12.6 Z" fill="#389fd6"/></svg></span><span id="m2_9_lb" class="tx " style="left:1084.35px;letter-spacing:0.054px;margin-left:-1055px;top:4.63px">Pull...</span></div><div class="mi" style="top:266px;height:27px;line-height:27px"><span class="ic" style="left:4px;top:3.75px"><svg width="20" height="20" viewBox="0 0 20 20" style="overflow:visible"><path d="M3.2,16.9 L13.4,6.7" stroke="#4aa55a" stroke-width="2.4" fill="none"/><path d="M7.4,3.2 H16.6 V12.4 Z" fill="#4aa55a"/></svg></span><span id="m2_10_lb" class="tx " style="left:1084.35px;letter-spacing:-0.215px;margin-left:-1055px;top:4.63px">Push...</span><span id="m2_10_sc" class="tx " style="left:1200.00px;letter-spacing:0.707px;margin-left:-1055px;top:4.63px">Ctrl+Shift+K</span></div><div class="sep" style="top:294px"></div><div class="mi" style="top:296px;height:27px;line-height:27px"><span id="m2_11_lb" class="tx " style="left:1084.35px;letter-spacing:-0.026px;margin-left:-1055px;top:4.63px">Rebase...</span></div></div>
<svg class="abs" style="left:1305px;top:610px" width="80" height="80" viewBox="0 0 80 80"><path d="M72,8.7 L70.2,8.8 L16.1,54.9 L15.4,50.2 L10.5,69.6 L29.5,63 L23.5,62.7 L72.2,9.8 Z" fill="#fe2015"/></svg>
</body></html>
